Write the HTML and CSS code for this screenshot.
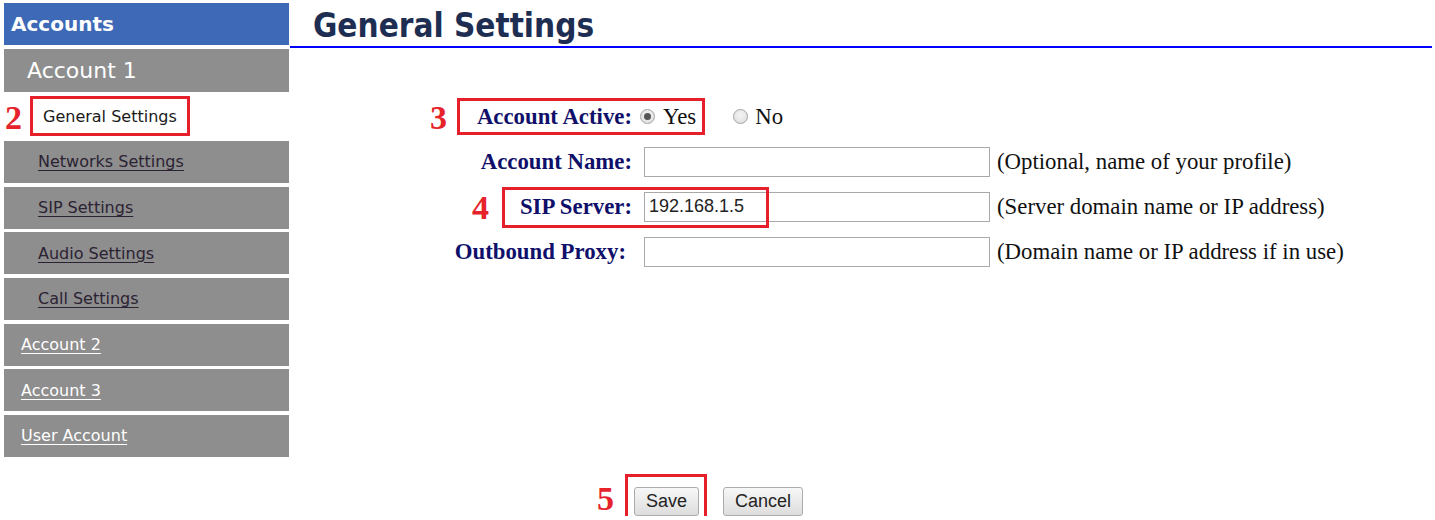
FILE: index.html
```html
<!DOCTYPE html>
<html lang="en">
<head>
<meta charset="utf-8">
<title>General Settings</title>
<link rel="stylesheet" href="styles.css">
</head>
<body>
<div class="page">
  <nav class="sidebar">
    <div class="side-head">Accounts</div>
    <div class="side-account current">Account 1</div>
    <div class="side-sub selected">
      <span class="step step-side">2</span>
      <span class="callout-inline">General Settings</span>
    </div>
    <a class="side-sub" href="#">Networks Settings</a>
    <a class="side-sub" href="#">SIP Settings</a>
    <a class="side-sub" href="#">Audio Settings</a>
    <a class="side-sub" href="#">Call Settings</a>
    <a class="side-account" href="#">Account 2</a>
    <a class="side-account" href="#">Account 3</a>
    <a class="side-account" href="#">User Account</a>
  </nav>

  <main class="main">
    <h1 class="title">General Settings</h1>

    <form class="settings">
      <div class="row">
        <span class="label">Account Active:</span>
        <span class="choices">
          <label class="choice"><input type="radio" name="active" checked> Yes</label>
          <label class="choice choice-no"><input type="radio" name="active"> No</label>
        </span>
      </div>
      <div class="row">
        <span class="label">Account Name:</span>
        <span class="field">
          <input class="text" type="text" value="">
          <span class="hint">(Optional, name of your profile)</span>
        </span>
      </div>
      <div class="row">
        <span class="label">SIP Server:</span>
        <span class="field">
          <input class="text" type="text" value="192.168.1.5">
          <span class="hint">(Server domain name or IP address)</span>
        </span>
      </div>
      <div class="row">
        <span class="label label-proxy">Outbound Proxy:</span>
        <span class="field">
          <input class="text" type="text" value="">
          <span class="hint">(Domain name or IP address if in use)</span>
        </span>
      </div>
    </form>

    <div class="actions">
      <button type="button" class="btn">Save</button>
      <button type="button" class="btn">Cancel</button>
    </div>

    <!-- step callouts drawn over the form -->
    <span class="step step-3">3</span>
    <span class="callout callout-3"></span>
    <span class="step step-4">4</span>
    <span class="callout callout-4"></span>
    <span class="step step-5">5</span>
    <span class="callout callout-5"></span>
  </main>
</div>
</body>
</html>
```

FILE: styles.css
```css
html, body {
  margin: 0;
  padding: 0;
  background: #ffffff;
}

body {
  font-family: "DejaVu Sans", Verdana, sans-serif;
}

.page {
  display: flex;
  align-items: flex-start;
}

/* ---------- sidebar ---------- */
.sidebar {
  width: 285px;
  margin: 3px 0 0 4px;
  display: flex;
  flex-direction: column;
  gap: 3.67px;
}

.side-head,
.side-account,
.side-sub {
  display: flex;
  align-items: center;
  height: 42px;
  box-sizing: border-box;
  font-size: 16px;
  text-decoration: underline;
  text-underline-offset: 3px;
}

.side-head {
  background: #3e69b6;
  color: #ffffff;
  font-weight: bold;
  font-size: 20px;
  padding-left: 7px;
  text-decoration: none;
}

.side-account {
  background: #8e8e8e;
  color: #ffffff;
  padding-left: 17px;
}

.side-account.current {
  height: 43px;
  font-size: 22px;
  padding-left: 23px;
  text-decoration: none;
}

.side-sub {
  background: #8e8e8e;
  color: #2b2233;
  padding-left: 34px;
}

.side-sub.selected {
  background: #ffffff;
  padding-left: 1px;
  text-decoration: none;
  color: #1a1a1a;
}

.callout-inline {
  margin-left: 8px;
  height: 40px;
  box-sizing: border-box;
  display: flex;
  align-items: center;
  padding: 0 10px;
  border: 3px solid #e5202a;
}

/* ---------- main area ---------- */
.main {
  position: relative;
  flex: 1;
  margin-left: 1px;
  margin-right: 3px;
}

.title {
  margin: 0;
  height: 48px;
  box-sizing: border-box;
  padding: 6px 0 0 23px;
  line-height: 40px;
  font-family: "DejaVu Sans Condensed", "DejaVu Sans", sans-serif;
  font-stretch: condensed;
  font-size: 33px;
  font-weight: bold;
  color: #1e2e52;
  border-bottom: 2px solid #0000ff;
}

.settings {
  margin-top: 46px;
  font-family: "Liberation Serif", "Times New Roman", serif;
  font-size: 22.8px;
}

.row {
  display: grid;
  grid-template-columns: 342px auto;
  column-gap: 12px;
  align-items: center;
  height: 45px;
}

.label {
  text-align: right;
  font-weight: bold;
  color: #10106a;
}

.label-proxy {
  padding-right: 6px;
}

.choices {
  display: flex;
  align-items: center;
  margin-left: -4px;
  color: #111111;
}

.choice {
  display: flex;
  align-items: center;
  gap: 8px;
}

.choice-no {
  margin-left: 37px;
  gap: 7px;
}

.choice input {
  appearance: none;
  -webkit-appearance: none;
  margin: 0;
  width: 15px;
  height: 15px;
  border-radius: 50%;
  border: 1px solid #a3a3a3;
  background: radial-gradient(circle at 50% 40%, #f4f4f4 0%, #dcdcdc 100%);
  box-sizing: border-box;
  position: relative;
}

.choice input:checked::after {
  content: "";
  position: absolute;
  left: 3px;
  top: 3px;
  width: 7px;
  height: 7px;
  border-radius: 50%;
  background: #555555;
}

.field {
  display: flex;
  align-items: center;
}

.text {
  width: 346px;
  height: 30px;
  box-sizing: border-box;
  margin: 0;
  padding: 0 4px;
  border: 1px solid #a9a9a9;
  font-family: "Liberation Sans", Arial, sans-serif;
  font-size: 18px;
  color: #222222;
  background: #ffffff;
}

.hint {
  margin-left: 7px;
  color: #111111;
  white-space: nowrap;
}

/* ---------- buttons ---------- */
.actions {
  display: flex;
  gap: 24px;
  margin: 213px 0 0 344px;
}

.btn {
  height: 29px;
  padding: 0 11px;
  border: 1px solid #acacac;
  border-radius: 3px;
  background: linear-gradient(#f7f7f7, #dddddd);
  font-family: "Liberation Sans", Arial, sans-serif;
  font-size: 18px;
  color: #222222;
}

/* ---------- step callouts ---------- */
.step {
  font-family: "Liberation Serif", "Times New Roman", serif;
  font-weight: bold;
  font-size: 34px;
  line-height: 34px;
  color: #e6232b;
}

.step-side {
  margin-top: 3px;
}

.main .step,
.callout {
  position: absolute;
}

.callout {
  box-sizing: border-box;
  border: 3px solid #e5202a;
}

.step-3 { left: 140px; top: 101px; }
.callout-3 { left: 167px; top: 98px; width: 248px; height: 37px; }

.step-4 { left: 182px; top: 191px; }
.callout-4 { left: 212px; top: 187px; width: 267px; height: 41px; }

.step-5 { left: 307px; top: 482px; }
.callout-5 { left: 335px; top: 474px; width: 82px; height: 46px; }
```
